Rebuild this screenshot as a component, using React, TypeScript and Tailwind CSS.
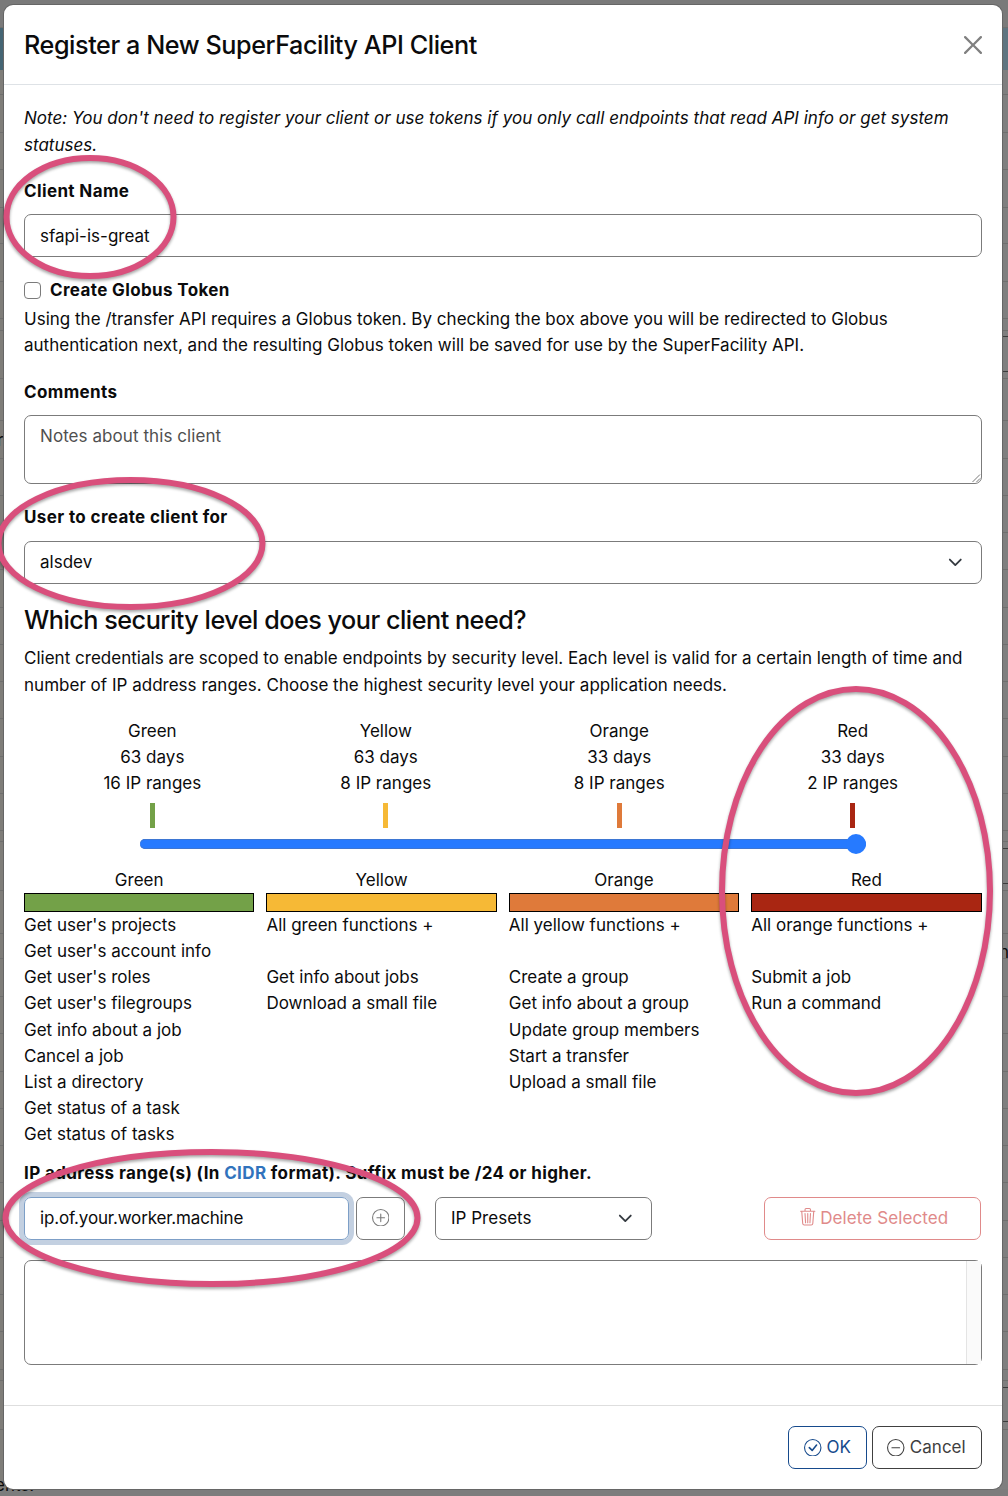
import React from "react";
import { BsCheckCircle, BsDashCircle, BsPlusCircle, BsTrash3 } from "react-icons/bs";

const faintRules = [
  27, 94, 132, 169, 207, 243, 281, 318, 330, 378, 420, 458, 495, 532, 569, 607, 644, 681, 718, 756, 793, 830, 841, 890,
  933, 958, 996, 1033, 1071, 1108, 1145, 1182, 1220, 1257, 1294, 1331, 1369, 1380, 1429,
];
const darkRules = [336, 371, 848, 883, 1387, 1421];

const levels = [
  { name: "Green", days: "63 days", ranges: "16 IP ranges", color: "bg-[#73a148]", items: ["Get user's projects", "Get user's account info", "Get user's roles", "Get user's filegroups", "Get info about a job", "Cancel a job", "List a directory", "Get status of a task", "Get status of tasks"] },
  { name: "Yellow", days: "63 days", ranges: "8 IP ranges", color: "bg-[#f6b936]", items: ["All green functions +", "", "Get info about jobs", "Download a small file"] },
  { name: "Orange", days: "33 days", ranges: "8 IP ranges", color: "bg-[#df7a3a]", items: ["All yellow functions +", "", "Create a group", "Get info about a group", "Update group members", "Start a transfer", "Upload a small file"] },
  { name: "Red", days: "33 days", ranges: "2 IP ranges", color: "bg-[#a92612]", items: ["All orange functions +", "", "Submit a job", "Run a command"] },
];

const rings = [
  { cx: 90, cy: 217, rx: 83.5, ry: 59 },
  { cx: 130.5, cy: 543.5, rx: 132, ry: 63.5 },
  { cx: 856, cy: 891, rx: 134, ry: 202 },
  { cx: 211.5, cy: 1218, rx: 206, ry: 66 },
];

function Backdrop({ side }: { side: "left" | "right" }) {
  return (
    <div className={side === "left" ? "absolute inset-y-0 left-0 w-3 bg-[#7f7d79]" : "absolute inset-y-0 right-0 w-3 bg-[#7f7f7f]"}>
      <div className="absolute inset-x-0 top-0 h-[27px] bg-[#7a7a7a]" />
      <div className={side === "left" ? "absolute inset-x-0 top-[27px] h-[43px] bg-[#456574]" : "absolute inset-x-0 top-[27px] h-[43px] bg-[#5f7480]"} />
      {faintRules.map((y) => (
        <div key={y} className="absolute inset-x-0 h-px bg-[#6f6f6e]" style={{ top: y }} />
      ))}
      {side === "right" && darkRules.map((y) => (
        <div key={y} className="absolute inset-x-0 h-px bg-[#3c3c3c]" style={{ top: y }} />
      ))}
    </div>
  );
}

function Chevron() {
  return (
    <svg viewBox="0 0 16 16" className="size-[14.6px]" fill="none" stroke="#343a40" strokeWidth="2" strokeLinecap="round" strokeLinejoin="round">
      <path d="m2 5 6 6 6-6" />
    </svg>
  );
}

function Label({ children }: { children: React.ReactNode }) {
  return <div className="h-[26px] font-bold tracking-[0.37px] whitespace-nowrap">{children}</div>;
}

export default function App() {
  return (
    <div className="relative h-[1496px] w-[1008px] overflow-hidden bg-[#7c7c7c] font-['Inter',sans-serif] text-[17px] leading-[26.2px] tracking-[0.01px] text-[#0b0b0c]">
      <Backdrop side="left" />
      <Backdrop side="right" />
      <div className="absolute inset-x-0 top-0 h-[5px] bg-[#7a7a7a]" />
      <div className="absolute inset-x-0 top-[1489px] h-[7px] bg-[#7d7d7d]" />
      <span className="absolute top-[427px] left-[-3px]">r</span>
      <span className="absolute top-[939px] left-[999px]">n</span>
      <span className="absolute top-[1472px] left-[-5px]">ents.</span>

      <div className="relative mr-[6px] ml-[4px] pt-[5px]">
        <div className="flex h-[1484px] flex-col rounded-[9px] bg-white shadow-[0_0_0_1px_#666]">
          <header className="flex h-[80px] shrink-0 items-center justify-between border-b border-[#dee2e6] px-5">
            <h1 className="pt-[2px] text-[25.2px] font-medium tracking-[-0.43px] whitespace-nowrap">Register a New SuperFacility API Client</h1>
            <svg viewBox="0 0 16 16" className="size-[18px]" fill="#808080">
              <path d="M.293.293a1 1 0 0 1 1.414 0L8 6.586 14.293.293a1 1 0 1 1 1.414 1.414L9.414 8l6.293 6.293a1 1 0 0 1-1.414 1.414L8 9.414l-6.293 6.293a1 1 0 0 1-1.414-1.414L6.586 8 .293 1.707a1 1 0 0 1 0-1.414z" />
            </svg>
          </header>

          <main className="flex flex-1 flex-col px-5 pt-5">
            <p className="h-[73px] leading-[26.6px] tracking-[0.018px] italic">
              Note: You don't need to register your client or use tokens if you only call endpoints that read API info or get system<br />statuses.
            </p>
            <Label>Client Name</Label>
            <div className="mt-[10px] flex h-[43px] items-center rounded-[7px] border border-[#7b7b7b] px-[15px] pt-[2px]">sfapi-is-great</div>

            <div className="mt-5 flex h-[26px] items-center">
              <span className="mt-px mr-[9px] size-[17px] rounded-[4px] border border-[#7b7b7b]" />
              <Label>Create Globus Token</Label>
            </div>
            <p className="mt-[3px] h-[73px] whitespace-nowrap">
              Using the /transfer API requires a Globus token. By checking the box above you will be redirected to Globus<br />authentication next, and the resulting Globus token will be saved for use by the SuperFacility API.
            </p>

            <Label>Comments</Label>
            <div className="relative mt-[10px] h-[69px] rounded-[7px] border border-[#7b7b7b] px-[15px] pt-[7px] tracking-[0.07px] text-[#505050]">
              Notes about this client
              <svg viewBox="0 0 9 9" className="absolute right-0 bottom-0 size-[9px]" fill="none" stroke="#555" strokeWidth="0.8">
                <path d="M0.5 8 8 0.5M4.5 8 8 4.5" />
              </svg>
            </div>

            <div className="mt-5"><Label>User to create client for</Label></div>
            <div className="mt-[11px] flex h-[43px] items-center justify-between rounded-[7px] border border-[#7b7b7b] pr-[18px] pl-[15px]">
              alsdev
              <Chevron />
            </div>

            <h2 className="mt-5 h-[41px] text-[25.2px] leading-[32px] font-medium tracking-[-0.49px] whitespace-nowrap">Which security level does your client need?</h2>
            <p className="h-[73px] leading-[26.6px] tracking-[0.015px] whitespace-nowrap">
              Client credentials are scoped to enable endpoints by security level. Each level is valid for a certain length of time and<br />number of IP address ranges. Choose the highest security level your application needs.
            </p>

            <div className="mr-[12.6px] ml-[11.6px] grid h-[121px] grid-cols-4 text-center">
              {levels.map((l) => (
                <div key={l.name} className="flex flex-col items-center">
                  <div>{l.name}</div>
                  <div>{l.days}</div>
                  <div>{l.ranges}</div>
                  <div className={`mt-[6.4px] h-[25px] w-[5px] ${l.color}`} />
                </div>
              ))}
            </div>
            <div className="mr-[116.5px] ml-[116px] flex h-[10px] items-center justify-end rounded-[5px] bg-[#267aff] shadow-[inset_0_-1px_0_#3d76d3,inset_0_1px_0_#3d76d3]">
              <span className="size-[19.4px] shrink-0 rounded-full bg-[#267aff]" />
            </div>

            <div className="mt-[18px] mr-[0.4px] grid h-[293px] grid-cols-4 gap-x-[12px]">
              {levels.map((l) => (
                <div key={l.name}>
                  <div className="h-[26px] text-center">{l.name}</div>
                  <div className={`h-[19px] border border-black ${l.color}`} />
                  {l.items.map((item, i) => (
                    <div key={i} className="h-[26.16px] whitespace-nowrap">{item}</div>
                  ))}
                </div>
              ))}
            </div>

            <Label>IP address range(s) (In <span className="text-[#3173bd]">CIDR</span> format). Suffix must be /24 or higher.</Label>
            <div className="mt-[11px] flex h-[43px] shrink-0 items-stretch pr-px">
              <div className="flex w-[325px] items-center rounded-[7px] border border-[#7d9fc7] px-[15px] tracking-[-0.17px] shadow-[0_0_0_5px_#c3d0e1]">
                ip.of.your.worker.machine
              </div>
              <div className="ml-[7px] flex w-[49px] items-center justify-center rounded-[7px] border border-[#7b7b7b] pb-[2px] text-[#7b7b7b]">
                <BsPlusCircle className="size-[17.5px]" />
              </div>
              <div className="ml-[30px] flex w-[217px] items-center justify-between rounded-[7px] border border-[#7b7b7b] pr-[18px] pl-[15px]">
                IP Presets
                <Chevron />
              </div>
              <div className="ml-auto flex w-[217px] items-center justify-center gap-[4px] rounded-[7px] border border-[#e08a8a] pl-[2px] text-[#e08a8a]">
                <BsTrash3 className="mb-[3px] size-[17.5px]" />
                <span className="tracking-[0.1px]">Delete Selected</span>
              </div>
            </div>

            <div className="mt-5 flex h-[105px] justify-end rounded-[7px] border border-[#7b7b7b]">
              <div className="w-[15px] border-l border-[#e4e4e4] bg-[#fafafa]" />
            </div>
          </main>

          <footer className="flex h-[84px] shrink-0 items-center justify-end gap-[5px] border-t border-[#dedede] px-5">
            <div className="flex h-[43px] w-[79px] items-center justify-center gap-[5px] rounded-[7px] border border-[#164a8c] text-[#164a8c]">
              <BsCheckCircle className="size-[17.5px]" />OK
            </div>
            <div className="flex h-[43px] w-[110px] items-center justify-center gap-[5px] rounded-[7px] border border-[#404040] pr-px text-[#404040]">
              <BsDashCircle className="size-[17.5px]" />Cancel
            </div>
          </footer>
        </div>
      </div>

      <svg className="pointer-events-none absolute inset-0 drop-shadow-[0_2px_1.5px_rgba(0,0,0,0.35)]" width="1008" height="1496" fill="none" stroke="#d94f7c" strokeWidth="6">
        {rings.map((r) => (
          <ellipse key={r.cy} cx={r.cx} cy={r.cy} rx={r.rx} ry={r.ry} />
        ))}
      </svg>
    </div>
  );
}
